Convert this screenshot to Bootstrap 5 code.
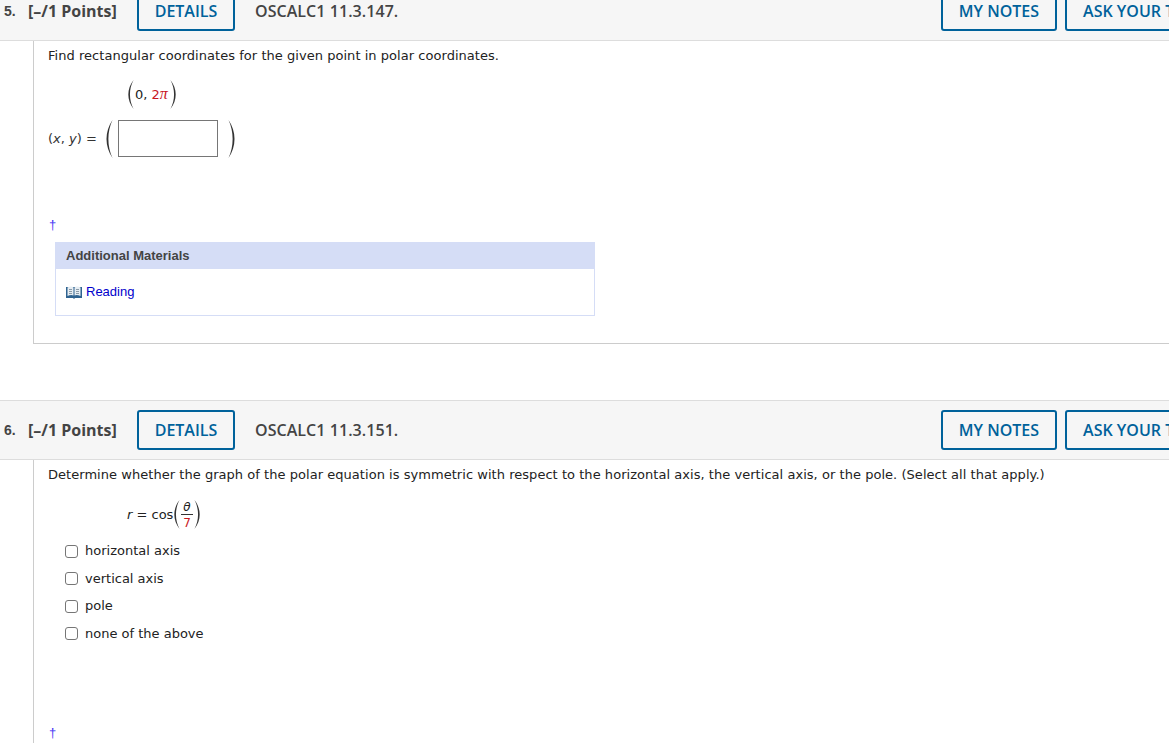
<!DOCTYPE html>
<html lang="en"><head><meta charset="utf-8"><title>Questions</title>
<link href="https://cdn.jsdelivr.net/npm/bootstrap@5.3.0/dist/css/bootstrap.min.css" rel="stylesheet">
<style>
html,body{height:743px;overflow:hidden;background:#fff}
.sheet{width:1169px;margin-top:-19px}
.qhead{height:60px;background:#f6f6f6;border-top:1px solid #ddd;border-bottom:1px solid #ddd;padding-left:4px;font-family:"Open Sans",sans-serif;color:#444;white-space:nowrap}
.qnum{font:700 14px/1 "Liberation Sans",sans-serif;width:24px}
.qpts{font-weight:700;font-size:16px;width:109px}
.qbtn{display:inline-block;height:40px;line-height:36px;border:2px solid #00629b;border-radius:3px;background:transparent;color:#00629b;font-weight:600;font-size:16px;padding:0 16px;flex:none;text-align:center}
.qbtn-d{width:98px;padding:0}
.qbtn-a{margin-right:-84px}
.qcode{font-weight:600;font-size:16px;margin-left:20px;letter-spacing:.06px}
.qbody{margin-left:33px;border-left:1px solid #ccc;padding-left:14px;font:13px/18px "DejaVu Sans",Verdana,sans-serif;color:#222}
.prompt{letter-spacing:.04px;padding-top:6px}
.q5{height:303px;border-bottom:1px solid #ccc;margin-bottom:56px}
.q6{height:290px}
.red{color:#c8161d}
.mi{font-style:italic}
.pi{font-family:"Liberation Serif",serif;font-style:italic;font-size:16px;line-height:1}
.par{fill:#333;flex:none;display:block}
.par-m{width:7px;height:29px}
.par-l{width:8px;height:38px}
.eq1{margin:15px 0 0 79px;height:29px}
.eq1 .val{width:36px;padding-left:1px}
.ansrow{margin-top:11px;height:38px}
.ansbox{width:100px;height:37px;border:1px solid #767676;background:#fff;margin:0 10px 0 5px}
.vars{width:57px;color:#333}
.dag{color:#4a38f5;font:13px/14px "Liberation Sans",sans-serif;padding-left:1px}
.dag5{margin-top:60px}
.dag6{margin-top:78.5px}
.addl{width:540px;margin:10px 0 0 7px;border:1px solid #d5ddf6;border-top:0;font-family:"Liberation Sans",sans-serif;font-size:13px}
.addl-h{background:#d5ddf6;height:27px;line-height:27px;padding-left:11px;font-weight:700;color:#444;margin:0 -1px}
.addl-b{height:46px;padding-left:10px}
.addl-b a{color:#00c;text-decoration:none}
.eq6{margin:16px 0 8.5px 79px;height:29px}
.cosw{width:46px;white-space:nowrap}
.frac{line-height:1;text-align:center;width:12px;margin:0 1px}
.frac b{display:block;height:1px;background:#333;margin:1px 0 2px}
.frac span{display:block;font-size:12px;line-height:12px}
.opt{height:27.5px;margin-left:17px;gap:7px;color:#222}
.box{width:13px;height:13px;border:1px solid #767676;border-radius:3px;background:#fff;appearance:none;flex:none;margin:0}
</style></head><body>
<svg width="0" height="0" class="d-block"><defs>
<symbol id="lp" viewBox="0 0 8 100" preserveAspectRatio="none"><path d="M7.500 0C-.5 30 -.5 70 7.500 100C2 70 2 30 7.500 0Z"/></symbol>
<symbol id="rp" viewBox="0 0 8 100" preserveAspectRatio="none"><path d="M.5 0C8.500 30 8.500 70 .5 100C6 70 6 30 .5 0Z"/></symbol>
</defs></svg>
<div class="sheet">
<div class="qhead d-flex align-items-center">
  <span class="qnum">5.</span><span class="qpts">[–/1 Points]</span>
  <span class="qbtn qbtn-d">DETAILS</span><span class="qcode flex-grow-1">OSCALC1 11.3.147.</span>
  <span class="qbtn me-2">MY NOTES</span><span class="qbtn qbtn-a">ASK YOUR TEACHER</span>
</div>
<div class="qbody q5">
  <div class="prompt">Find rectangular coordinates for the given point in polar coordinates.</div>
  <div class="eq1 d-flex align-items-center"><svg class="par par-m"><use href="#lp"/></svg><span class="val">0, <span class="red">2</span><span class="pi red">π</span></span><svg class="par par-m"><use href="#rp"/></svg></div>
  <div class="ansrow d-flex align-items-center"><span class="vars">(<i>x</i>, <i>y</i>) =</span><svg class="par par-l"><use href="#lp"/></svg><span class="ansbox align-self-start"></span><svg class="par par-l"><use href="#rp"/></svg></div>
  <div class="dag dag5">†</div>
  <div class="addl">
    <div class="addl-h">Additional Materials</div>
    <div class="addl-b d-flex align-items-center"><svg width="16" height="15" viewBox="0 0 16 15" class="me-1 flex-shrink-0"><path d="M0 2h16v11H9l-1 1-1-1H0z" fill="#2f6390"/><path d="M1.500 2.500Q5 .5 7.500 2.500v8Q5 9.300 1.500 11zM14.500 2.500Q11 .5 8.500 2.500v8Q11 9.300 14.500 11z" fill="#e6edf2"/><path d="M3 4.500h3M3 6.500h3M3 8.500h3M10 4.500h3M10 6.500h3M10 8.500h3" stroke="#8a9aa8"/></svg><a href="#">Reading</a></div>
  </div>
</div>
<div class="qhead d-flex align-items-center">
  <span class="qnum">6.</span><span class="qpts">[–/1 Points]</span>
  <span class="qbtn qbtn-d">DETAILS</span><span class="qcode flex-grow-1">OSCALC1 11.3.151.</span>
  <span class="qbtn me-2">MY NOTES</span><span class="qbtn qbtn-a">ASK YOUR TEACHER</span>
</div>
<div class="qbody q6">
  <div class="prompt">Determine whether the graph of the polar equation is symmetric with respect to the horizontal axis, the vertical axis, or the pole. (Select all that apply.)</div>
  <div class="eq6 d-flex align-items-center"><span class="cosw"><i>r</i> = cos</span><svg class="par par-m"><use href="#lp"/></svg><span class="frac"><span class="mi">θ</span><b></b><span class="red">7</span></span><svg class="par par-m"><use href="#rp"/></svg></div>
  <label class="opt d-flex align-items-center"><input class="box" type="checkbox">horizontal axis</label>
  <label class="opt d-flex align-items-center"><input class="box" type="checkbox">vertical axis</label>
  <label class="opt d-flex align-items-center"><input class="box" type="checkbox">pole</label>
  <label class="opt d-flex align-items-center"><input class="box" type="checkbox">none of the above</label>
  <div class="dag dag6">†</div>
</div>
</div>
<script src="https://cdn.jsdelivr.net/npm/bootstrap@5.3.0/dist/js/bootstrap.bundle.min.js"></script>
</body></html>
